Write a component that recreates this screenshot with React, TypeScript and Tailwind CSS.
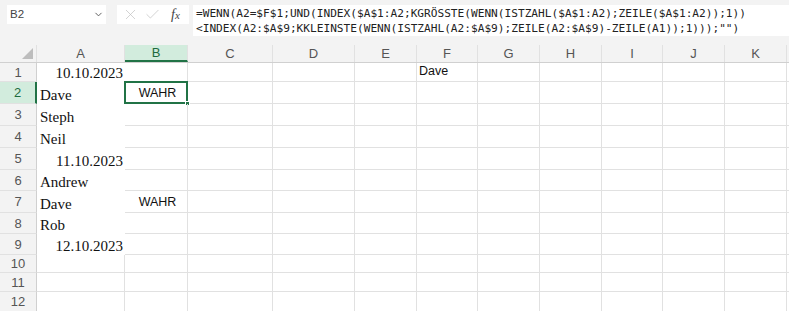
import { ChevronDown, X, Check } from 'lucide-react';

const cols = ['A', 'B', 'C', 'D', 'E', 'F', 'G', 'H', 'I', 'J', 'K'];
const widths = [88, 63, 85, 82, 62, 61, 62, 62, 61, 62, 62];
const heights = [19, 22, 22, 22, 22, 21, 22, 21, 21, 18, 19, 20];

type CellA = { text: string; date?: boolean };
const colA: CellA[] = [
  { text: '10.10.2023', date: true },
  { text: 'Dave' },
  { text: 'Steph' },
  { text: 'Neil' },
  { text: '11.10.2023', date: true },
  { text: 'Andrew' },
  { text: 'Dave' },
  { text: 'Rob' },
  { text: '12.10.2023', date: true },
];

export default function App() {
  return (
    <div className="w-[789px] h-[311px] overflow-hidden bg-white font-['Liberation_Sans',sans-serif] text-[#222]">
      {/* Formula bar */}
      <div className="h-[45px] bg-[#f3f3f3] flex items-start pt-[5px] pl-[7px]">
        <div className="w-[99px] h-[19px] bg-white flex items-center justify-between pl-[3px] pr-[2px] text-[11.5px] text-[#444]">
          <span>B2</span>
          <ChevronDown size={11} strokeWidth={2} className="text-[#555]" />
        </div>
        <div className="ml-[11px] w-[72px] h-[19px] bg-white flex items-center gap-[5px] pl-[5px] text-[#c0c0c0]">
          <X size={17} strokeWidth={1} />
          <Check size={17} strokeWidth={1} />
          <span className="ml-[5px] font-['Liberation_Serif',serif] italic text-[14px] text-[#444]">
            f<span className="text-[11px]">x</span>
          </span>
        </div>
        <div className="ml-[4px] flex-1 h-[31px] bg-white pl-[3px] pt-[1px] font-['DejaVu_Sans_Mono',monospace] text-[11.15px] leading-[15px] text-[#222] whitespace-nowrap">
          <div>=WENN(A2=$F$1;UND(INDEX($A$1:A2;KGRÖSSTE(WENN(ISTZAHL($A$1:A2);ZEILE($A$1:A2));1))</div>
          <div>{'<INDEX(A2:$A$9;KKLEINSTE(WENN(ISTZAHL(A2:$A$9);ZEILE(A2:$A$9)-ZEILE(A1));1)));""'})</div>
        </div>
      </div>

      {/* Column headers */}
      <div className="flex h-[18px] bg-[#f3f3f3] border-b border-[#d0d0d0] text-[13px] text-[#555]">
        <div className="w-[37px] shrink-0 relative border-r border-[#e1e1e1]">
          <div className="absolute right-[3px] bottom-[3px] w-0 h-0 border-l-[11px] border-l-transparent border-b-[11px] border-b-[#bdbdbd]" />
        </div>
        {cols.map((c, i) =>
          c === 'B' ? (
            <div
              key={c}
              style={{ width: widths[i] }}
              className="shrink-0 flex items-center justify-center bg-[#d2ecdd] text-[#1e6b3e] border-b-2 border-[#217346] border-r border-r-[#e1e1e1]"
            >
              {c}
            </div>
          ) : (
            <div key={c} style={{ width: widths[i] }} className="shrink-0 flex items-center justify-center border-r border-[#e1e1e1]">
              {c}
            </div>
          )
        )}
        <div className="flex-1" />
      </div>

      {/* Rows */}
      {heights.map((h, r) => {
        const a = colA[r];
        const selected = r === 1;
        return (
          <div key={r} className="flex" style={{ height: h }}>
            <div
              className={
                selected
                  ? 'w-[37px] shrink-0 flex items-center justify-center pt-[1px] text-[13px] text-[#1e6b3e] bg-[#d2ecdd] border-r-2 border-r-[#217346] border-b border-b-[#e1e1e1]'
                  : 'w-[37px] shrink-0 flex items-center justify-center pt-[1px] text-[13px] text-[#555] bg-[#f3f3f3] border-r border-[#d0d0d0] border-b border-b-[#e1e1e1]'
              }
            >
              {r + 1}
            </div>
            {/* Column A */}
            <div
              className={
                a
                  ? 'w-[88px] shrink-0 flex items-end font-[\'Liberation_Serif\',serif] text-[15px] leading-[18px] text-[#111] whitespace-nowrap'
                  : 'w-[88px] shrink-0 border-r border-b border-[#e1e1e1]'
              }
            >
              {a && (
                <span className={a.date ? 'ml-auto pr-[2px]' : 'pl-[3px]'}>{a.text}</span>
              )}
            </div>
            {/* Column B */}
            <div className="w-[63px] shrink-0 relative flex items-end justify-center pb-[2px] pl-[3px] text-[12.5px] leading-[15px] text-[#111] border-r border-b border-[#e1e1e1]">
              {(r === 1 || r === 6) && <span>WAHR</span>}
              {selected && (
                <>
                  <div className="absolute -left-[1px] -top-[1px] right-[-1px] bottom-[-1px] border-2 border-[#217346]" />
                  <div className="absolute right-[-3px] bottom-[-3px] w-[5px] h-[5px] bg-[#217346] border border-white" />
                </>
              )}
            </div>
            {widths.slice(2).map((w, i) => (
              <div
                key={i}
                style={{ width: w }}
                className="shrink-0 flex items-end pb-[2px] pl-[2px] text-[12.5px] leading-[15px] text-[#111] border-r border-b border-[#e1e1e1]"
              >
                {r === 0 && i === 3 ? 'Dave' : ''}
              </div>
            ))}
            <div className="flex-1 border-b border-[#e1e1e1]" />
          </div>
        );
      })}
    </div>
  );
}
